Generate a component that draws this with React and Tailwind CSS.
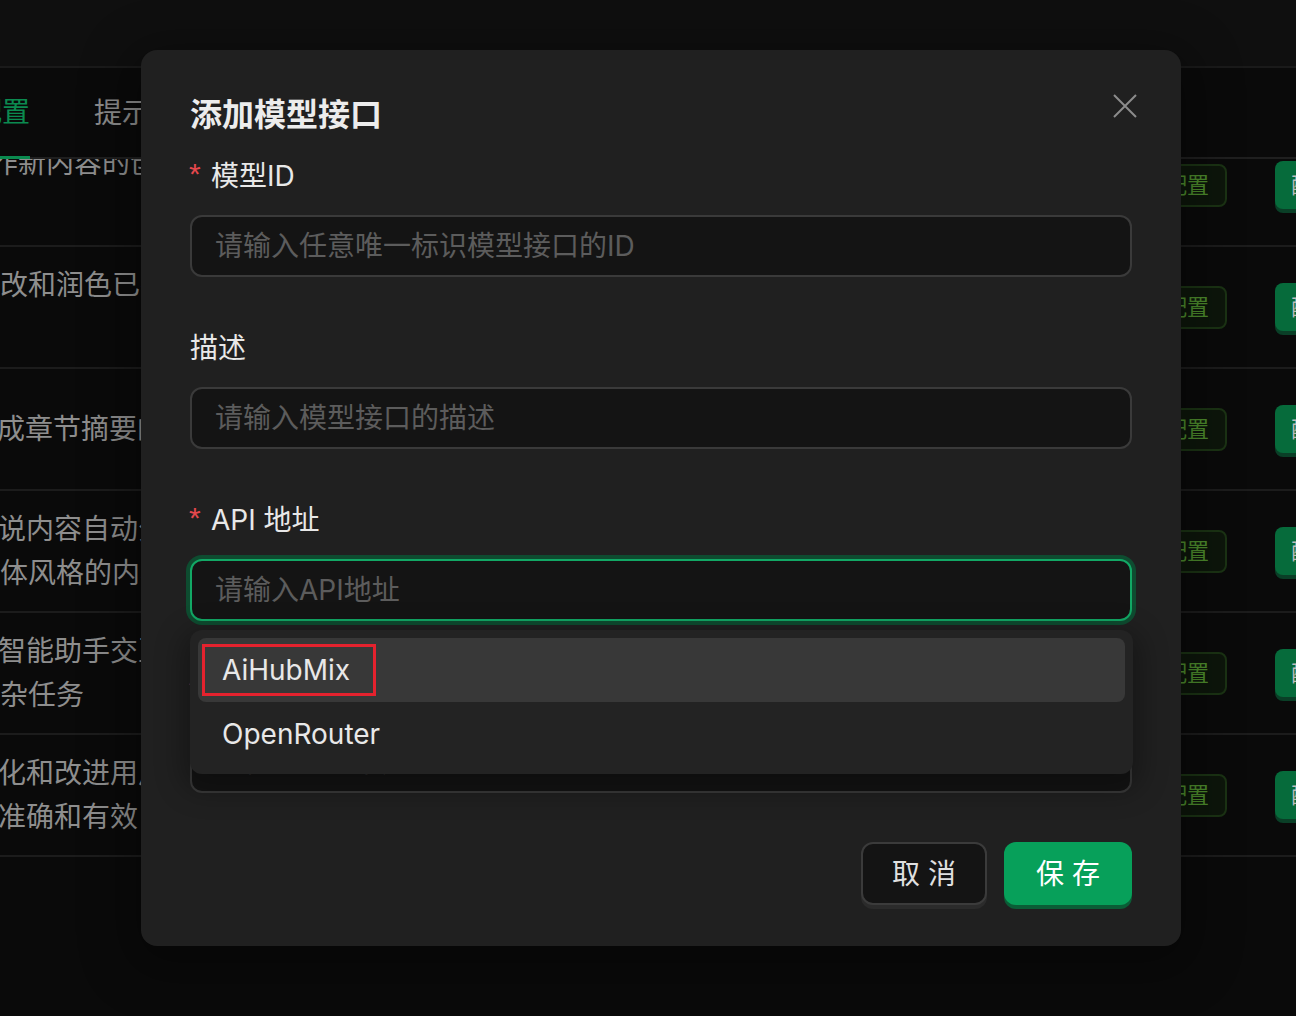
import React from "react";

const rows = [
  { lines: [["作新内容的创意", "-ml-[10px]"], ["", ""]] },
  { lines: [["修改和润色已有内容", "-ml-[28px]"], ["", ""]] },
  { lines: [["生成章节摘要的内容", "-ml-[31px]"]] },
  { lines: [["小说内容自动分析", "-ml-[30px]"], ["文体风格的内容", "-ml-[28px]"]] },
  { lines: [["与智能助手交互", "-ml-[30px]"], ["复杂任务", "-ml-[28px]"]] },
  { lines: [["优化和改进用户", "-ml-[30px]"], ["更准确和有效", "-ml-[30px]"]] },
];

function Field({ label, required, placeholder, focused, children, last }) {
  return (
    <div className={last ? "" : "mb-[51px]"}>
      <div className="h-[40px] flex items-center text-[28px] leading-[40px] text-[#e8e8e8] mb-[19px]">
        {required && (
          <span className="inline-block w-[22px] text-[30px] leading-none text-[#e5484d] font-['Liberation_Sans',sans-serif] relative -top-[2px] -ml-[1px]">
            *
          </span>
        )}
        <span>{label}</span>
      </div>
      <div className="relative">
        <input
          readOnly
          placeholder={placeholder}
          className={
            "block w-full h-[62px] rounded-[12px] border-2 bg-[#141414] pl-[23px] pr-[23px] text-[28px] text-[#e8e8e8] outline-none placeholder:text-[#5c5c5c] " +
            (focused
              ? "border-[#12a865] shadow-[0_0_0_4px_#0e4c30]"
              : "border-[#3a3a3a]")
          }
        />
        {children}
      </div>
    </div>
  );
}

export default function App() {
  return (
    <div className="relative w-[1296px] h-[1016px] overflow-hidden bg-[#0a0a0a] font-['Inter','Noto_Sans_CJK_SC',sans-serif]">
      {/* Top bar */}
      <div className="h-[68px] bg-[#0f0f0f] border-b-2 border-[#1a1a1a]" />
      {/* Tabs header */}
      <div className="relative z-[1] h-[91px] bg-[#0a0a0a] border-b-2 border-[#1f1f1f] flex items-stretch text-[28px]">
        <div className="-ml-[26px] flex items-center border-b-[3px] border-[#0a8a4f] -mb-[2px] text-[#0b8a50] whitespace-nowrap">
          配置
        </div>
        <div className="ml-[64px] flex items-center text-[#8c8c8c] whitespace-nowrap">
          提示词管理
        </div>
      </div>
      {/* Table body */}
      <div className="-mt-[34px]">
        {rows.map((r, i) => (
          <div
            key={i}
            className="flex items-center h-[122px] border-b-2 border-[#1c1c1c] w-[1400px]"
          >
            <div className="w-[1147px] shrink-0 overflow-hidden text-[28px] leading-[44px] text-[#8e8e8e]">
              {r.lines.map(([t, m], j) => (
                <div key={j} className={"whitespace-nowrap h-[44px] " + m}>
                  {t}
                </div>
              ))}
            </div>
            <div className="shrink-0 w-[80px] h-[43px] rounded-[8px] border-2 border-[#1b3314] bg-[#0d160b] text-[22px] text-[#4c8a2c] flex items-center justify-center">
              配置
            </div>
            <div className="shrink-0 ml-[48px] w-[120px] h-[48px] rounded-[8px] bg-[#066b3b] shadow-[0_4px_0_#0a3f27] text-[22px] text-[#bdbdbd] flex items-center pl-[16px] whitespace-nowrap">
              配置提示词
            </div>
          </div>
        ))}
      </div>

      {/* Modal */}
      <div className="absolute z-10 left-[141px] top-[50px] w-[1040px] h-[896px] rounded-[16px] bg-[#202020] px-[49px] pt-[41px] shadow-[0_12px_48px_16px_rgba(0,0,0,0.3)]">
        <div className="text-[32px] font-bold leading-[48px] text-[#ececec]">
          添加模型接口
        </div>
        <button className="absolute left-[972px] top-[44px] w-[24px] h-[24px] text-[#8c8c8c]">
          <svg width="24" height="24" viewBox="0 0 24 24" fill="none">
            <path d="M1 1L23 23M23 1L1 23" stroke="currentColor" strokeWidth="2" />
          </svg>
        </button>

        <div className="mt-[17px]">
          <Field label="模型ID" required placeholder="请输入任意唯一标识模型接口的ID" />
          <Field label="描述" placeholder="请输入模型接口的描述" />
          <Field label="API 地址" required placeholder="请输入API地址" focused>
            <div className="absolute z-20 left-0 right-[-1px] top-[71px] rounded-[12px] bg-[#232323] p-[8px] shadow-[0_9px_28px_8px_rgba(0,0,0,0.3)]">
              <div className="relative h-[64px] rounded-[8px] bg-[#383838] px-[24px] flex items-center text-[28px] text-[#e8e8e8]">
                AiHubMix
                <div className="absolute left-[4px] top-[6px] w-[174px] h-[52px] border-[3px] border-[#e5222e]" />
              </div>
              <div className="h-[64px] px-[24px] flex items-center text-[28px] text-[#e8e8e8]">
                OpenRouter
              </div>
            </div>
          </Field>
          <Field label="API 密钥" required placeholder="请输入API密钥" last />
        </div>

        <div className="mt-[49px] flex justify-end gap-[17px]">
          <button className="w-[126px] h-[63px] rounded-[12px] border-2 border-[#3b3b3b] bg-[#141414] text-[28px] text-[#e0e0e0] shadow-[0_4px_0_#2b2b2b]">
            取 消
          </button>
          <button className="w-[128px] h-[63px] rounded-[12px] bg-[#07a05a] text-[28px] text-white shadow-[0_4px_0_#0a5d36]">
            保 存
          </button>
        </div>
      </div>
    </div>
  );
}
